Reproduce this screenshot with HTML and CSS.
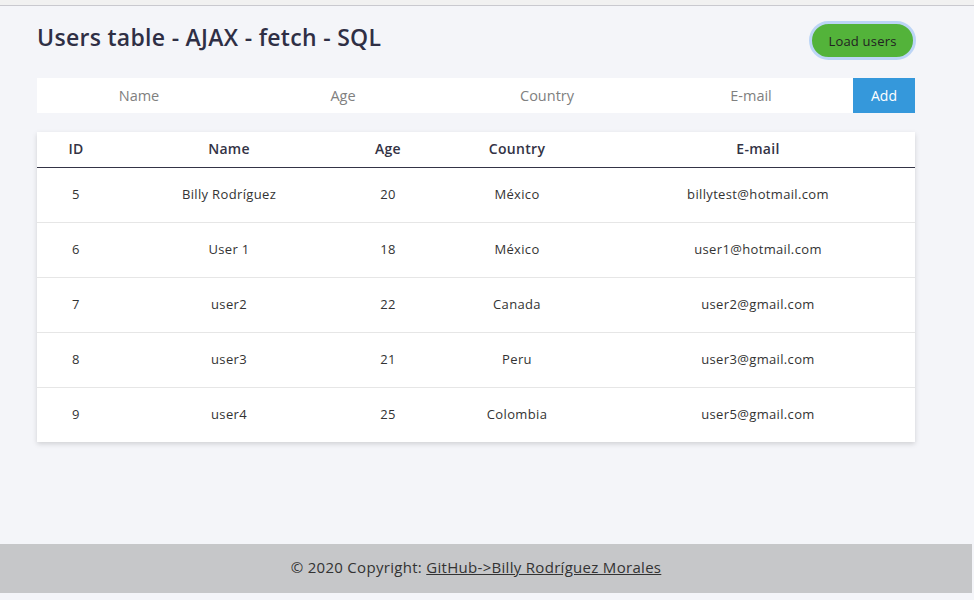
FILE: index.html
```html
<!DOCTYPE html>
<html>
<head>
<meta charset="utf-8">
<link rel="stylesheet" href="styles.css">
</head>
<body>
<div class="topbar"></div>
<main class="main">
  <div class="head">
    <h1 class="title">Users table - AJAX - fetch - SQL</h1>
    <button class="load">Load users</button>
  </div>
  <form class="form">
    <input class="field" placeholder="Name">
    <input class="field" placeholder="Age">
    <input class="field" placeholder="Country">
    <input class="field" placeholder="E-mail">
    <button type="button" class="add">Add</button>
  </form>
  <div class="card">
    <table class="table">
      <colgroup>
        <col style="width:78px"><col style="width:228px"><col style="width:90px"><col style="width:168px"><col style="width:314px">
      </colgroup>
      <thead>
        <tr><th>ID</th><th>Name</th><th>Age</th><th>Country</th><th>E-mail</th></tr>
      </thead>
      <tbody>
        <tr><td>5</td><td>Billy Rodríguez</td><td>20</td><td>México</td><td>billytest@hotmail.com</td></tr>
        <tr><td>6</td><td>User 1</td><td>18</td><td>México</td><td>user1@hotmail.com</td></tr>
        <tr><td>7</td><td>user2</td><td>22</td><td>Canada</td><td>user2@gmail.com</td></tr>
        <tr><td>8</td><td>user3</td><td>21</td><td>Peru</td><td>user3@gmail.com</td></tr>
        <tr><td>9</td><td>user4</td><td>25</td><td>Colombia</td><td>user5@gmail.com</td></tr>
      </tbody>
    </table>
  </div>
</main>
<footer class="footer"><p class="footer-text">© 2020 Copyright: <a class="link" href="#">GitHub-&gt;Billy Rodríguez Morales</a></p></footer>
</body>
</html>
```
FILE: styles.css
```css
* { box-sizing: border-box; }
html, body { margin: 0; padding: 0; }
body {
  background: #f4f5f9;
  font-family: "Open Sans", "Liberation Sans", sans-serif;
  color: #333;
  height: 600px;
  overflow: hidden;
}
.topbar {
  height: 6px;
  background: #f1f1f1;
  border-bottom: 1px solid #c9c9cf;
}
.main {
  width: 878px;
  margin-left: 37px;
  height: 538px;
}
.head {
  display: flex;
  justify-content: space-between;
  align-items: flex-start;
  height: 72px;
  padding-top: 16px;
}
.title {
  margin: -1px 0 0;
  font-size: 23px;
  font-weight: 600;
  color: #2f2f45;
  letter-spacing: 0.3px;
}
.load {
  width: 107px;
  height: 39px;
  background: #53b33a;
  border: 3px solid #bcd5f6;
  border-radius: 20px;
  color: #222;
  font-family: inherit;
  font-size: 13px;
  letter-spacing: 0.2px;
  padding: 0;
  margin-top: -1px;
  margin-right: -1px;
}
.form {
  display: flex;
  height: 35px;
  margin: 0;
}
.field {
  width: 204px;
  height: 35px;
  border: none;
  background: #fff;
  text-align: center;
  font-family: inherit;
  font-size: 14.5px;
  outline: none;
  padding: 0;
}
.field::placeholder { color: #808080; }
.add {
  width: 62px;
  height: 35px;
  border: none;
  background: #3598db;
  color: #fff;
  font-family: inherit;
  font-size: 14px;
  padding: 0;
}
.card {
  margin-top: 19px;
  background: #fff;
  box-shadow: 0 2px 5px rgba(0,0,0,0.15);
}
.table {
  width: 100%;
  border-collapse: collapse;
  table-layout: fixed;
}
.table th {
  height: 35px;
  font-size: 14px;
  font-weight: 600;
  letter-spacing: 0.3px;
  color: #333345;
  border-bottom: 1px solid #343446;
  padding: 0 0 2px;
}
.table td {
  height: 55px;
  text-align: center;
  font-size: 13px;
  letter-spacing: 0.35px;
  color: #333;
  border-bottom: 1px solid #e6e6e6;
  padding: 0 0 2px;
}
.table tbody tr:last-child td { border-bottom: none; }
.footer {
  height: 49px;
  width: 972px;
  background: #c6c7c9;
  display: flex;
  align-items: center;
  justify-content: center;
  padding: 0 20px 3px 0;
}
.footer-text {
  margin: 0;
  font-size: 15px;
  letter-spacing: 0.3px;
  color: #333;
}
.link { color: #333; text-decoration: underline; }
```
